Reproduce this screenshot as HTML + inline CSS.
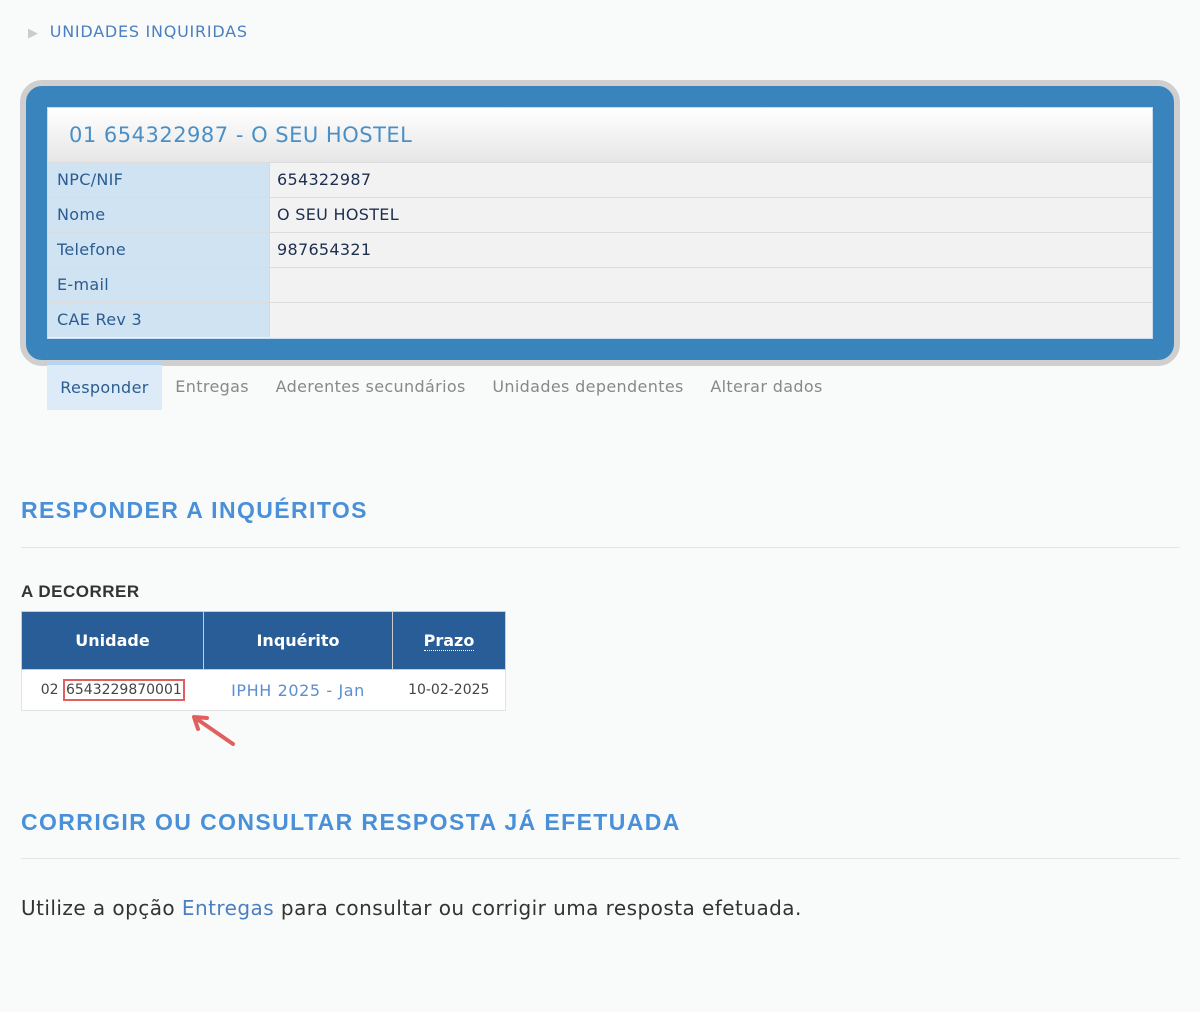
<!DOCTYPE html>
<html><head><meta charset="utf-8"><style>
body{margin:0;background:#f9fbfa;font-family:"DejaVu Sans",Verdana,sans-serif;width:1200px;height:1012px;position:relative;overflow:hidden}
.a{position:absolute}
.crumb{left:28px;top:22px;font-size:16px;color:#4a7fc1;letter-spacing:.75px}
.crumb span{color:#ccc;font-size:13px;margin-right:11px}
.outer{left:20px;top:80px;width:1148px;height:274px;border:6px solid #cfcfcf;border-radius:22px;background:#3a84bd}
.panel{left:47px;top:107px;width:1104px;height:230px;background:#f2f2f2;border:1px solid #c8dced}
.hdr{height:54px;background:linear-gradient(#fff,#e6e6e6);color:#4a90c7;font-size:21px;letter-spacing:.5px;line-height:54px;padding-left:21px}
.row{height:34px;border-top:1px solid #dcdcdc;display:flex;font-size:16px;line-height:34px;letter-spacing:.3px}
.row .l{width:212px;background:#cfe3f3;color:#2b5c91;padding-left:9px;border-right:1px solid #c8dced}
.row .v{padding-left:7px;color:#1d2f4f}
.tabs{left:47px;top:362px;height:48px;display:flex;font-size:16px;line-height:50px;color:#888;letter-spacing:.35px}
.tabs div{padding:0 13.3px}
.tabs .on{background:#dcebf7;color:#2b5c91;border-top:3px solid #b5d4ef;line-height:45px}
h2{position:absolute;margin:0;left:21px;font-family:"Liberation Sans",Arial,sans-serif;font-weight:bold;font-size:23px;letter-spacing:1.4px;color:#4a90d9}
.rule{left:21px;width:1159px;height:1px;background:#e5e5e5}
table{position:absolute;left:21px;top:611px;border-collapse:collapse;font-size:14px}
th{background:#285d98;color:#fff;height:57px;border:1px solid #ccc;font-size:16px;padding:0}
td{height:40px;background:#fff;border-top:1px solid #e3e3e3;border-bottom:1px solid #e3e3e3;text-align:center;color:#444;padding:0}
</style></head><body>
<div class="a crumb"><span>▶</span>UNIDADES INQUIRIDAS</div>
<div class="a outer"></div>
<div class="a panel">
<div class="hdr">01 654322987 - O SEU HOSTEL</div>
<div class="row"><div class="l">NPC/NIF</div><div class="v">654322987</div></div>
<div class="row"><div class="l">Nome</div><div class="v">O SEU HOSTEL</div></div>
<div class="row"><div class="l">Telefone</div><div class="v">987654321</div></div>
<div class="row"><div class="l">E-mail</div><div class="v"></div></div>
<div class="row"><div class="l">CAE Rev 3</div><div class="v"></div></div>
</div>
<div class="a tabs"><div class="on">Responder</div><div>Entregas</div><div>Aderentes secundários</div><div>Unidades dependentes</div><div>Alterar dados</div></div>
<h2 style="top:497px">RESPONDER A INQUÉRITOS</h2>
<div class="a rule" style="top:547px"></div>
<div class="a" style="left:21px;top:582px;font-family:'Liberation Sans',Arial,sans-serif;font-weight:bold;font-size:17px;color:#333;letter-spacing:.5px">A DECORRER</div>
<table><tr><th style="width:181px">Unidade</th><th style="width:188px">Inquérito</th><th style="width:112px"><span style="border-bottom:1px dotted #fff">Prazo</span></th></tr>
<tr><td style="border-left:1px solid #e3e3e3">02 <span style="border:2px solid #e06060;padding:1px 1px">6543229870001</span></td><td style="color:#5b8fcf;font-size:16px;letter-spacing:.6px">IPHH 2025 - Jan</td><td style="border-right:1px solid #e3e3e3">10-02-2025</td></tr></table>
<svg class="a" style="left:185px;top:705px" width="55" height="45"><path d="M48 39 L9 12 M9 12 L22 13 M9 12 L13 24" stroke="#e06060" stroke-width="4" stroke-linecap="round" fill="none"/></svg>
<h2 style="top:809px">CORRIGIR OU CONSULTAR RESPOSTA JÁ EFETUADA</h2>
<div class="a rule" style="top:858px"></div>
<div class="a" style="left:21px;top:896px;font-size:20px;letter-spacing:.45px;color:#333">Utilize a opção <span style="color:#4a7fc1">Entregas</span> para consultar ou corrigir uma resposta efetuada.</div>
</body></html>
